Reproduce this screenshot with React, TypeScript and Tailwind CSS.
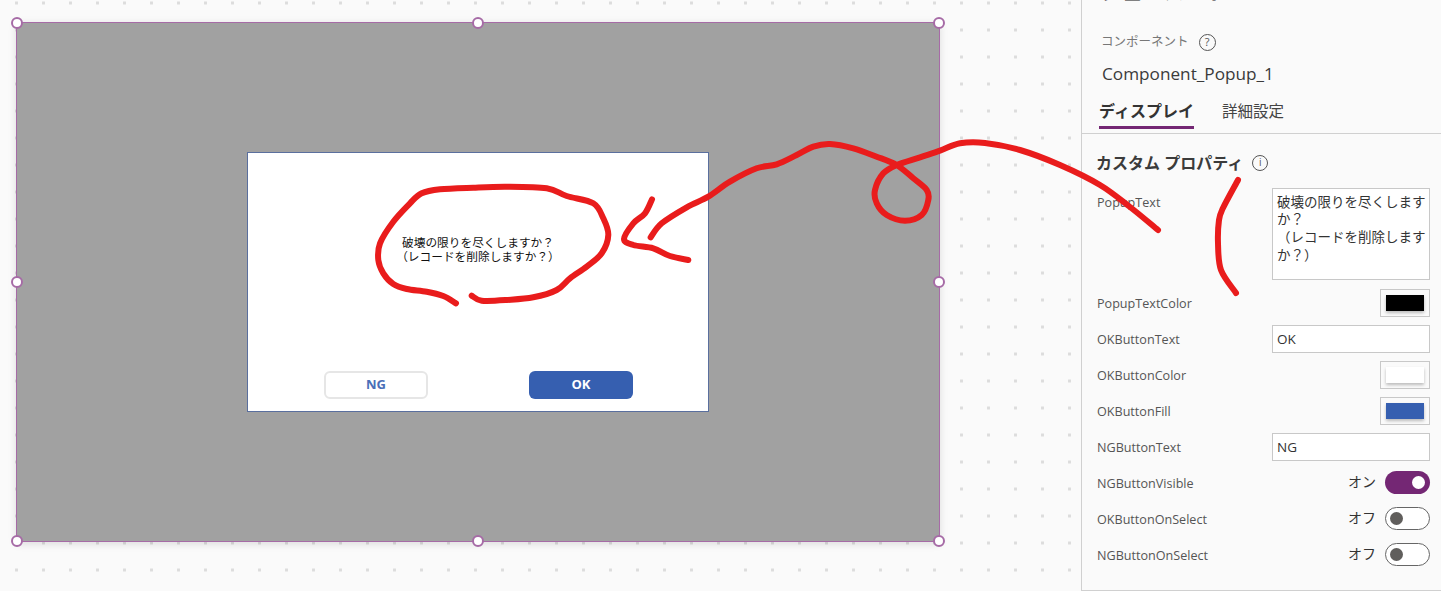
const font = { fontFamily: '"Open Sans","Noto Sans CJK JP",sans-serif' };

type P = [number, number];

function smooth(points: P[]): string {
  let d = `M${points[0][0]} ${points[0][1]}`;
  for (let i = 0; i < points.length - 1; i++) {
    const p0 = points[Math.max(i - 1, 0)];
    const p1 = points[i];
    const p2 = points[i + 1];
    const p3 = points[Math.min(i + 2, points.length - 1)];
    const c1x = p1[0] + (p2[0] - p0[0]) / 6;
    const c1y = p1[1] + (p2[1] - p0[1]) / 6;
    const c2x = p2[0] - (p3[0] - p1[0]) / 6;
    const c2y = p2[1] - (p3[1] - p1[1]) / 6;
    d += ` C${c1x.toFixed(1)} ${c1y.toFixed(1)} ${c2x.toFixed(1)} ${c2y.toFixed(1)} ${p2[0].toFixed(1)} ${p2[1].toFixed(1)}`;
  }
  return d;
}

const map = (pts: P[], ox: number, oy: number): P[] => pts.map(([x, y]) => [ox + x / 3, oy + y / 3]);

const ring = map(
  [[648, 490], [610, 468], [560, 455], [500, 447], [460, 432], [430, 400], [415, 360], [420, 310], [460, 245], [510, 190], [545, 160], [600, 148], [700, 143], [800, 140], [920, 145], [980, 168], [1060, 190], [1090, 235], [1105, 285], [1085, 340], [1040, 380], [990, 415], [950, 450], [880, 472], [800, 480], [725, 482], [695, 467]],
  240, 140,
);
const head = map(
  [[1236, 178], [1215, 220], [1180, 250], [1152, 297], [1180, 315], [1240, 325], [1290, 348], [1345, 360]],
  240, 140,
);
const tail: P[] = [
  ...map(
    [[92, 322], [125, 280], [200, 232], [265, 200], [330, 155], [410, 115], [470, 103], [530, 75], [580, 50], [630, 42], [700, 55], [770, 80], [830, 105], [880, 145], [920, 180], [925, 210], [905, 255], [855, 272], [800, 255], [770, 220], [765, 180], [790, 130], [830, 105], [900, 82], [960, 62], [1020, 40]],
    620, 130,
  ),
  [985, 143], [1020, 150], [1060, 165], [1100, 185], [1130, 207], [1158, 230],
];
const bracket: P[] = [[1238, 180], [1223, 208], [1219, 220], [1218, 243], [1221, 270], [1236, 293]];

function Handle({ className }: { className: string }) {
  return <span className={`absolute h-3 w-3 rounded-full border-2 border-[#a66ba6] bg-white ${className}`} />;
}

function Row({ label, children }: { label: string; children: React.ReactNode }) {
  return (
    <div className="flex h-9 items-center justify-between">
      <span className="text-[12.6px] text-[#555]">{label}</span>
      <div className="mb-[4px]">{children}</div>
    </div>
  );
}

function TextBox({ value }: { value: string }) {
  return (
    <div className="flex h-7 w-[158px] items-center border border-[#c8c8c8] bg-white px-1 text-[13.5px] text-[#333]">{value}</div>
  );
}

function Swatch({ color }: { color: string }) {
  return (
    <div className="flex h-7 w-[50px] items-center justify-center border border-[#c8c8c8]">
      <div className="h-4 w-[38px] shadow-[0_2px_3px_rgba(0,0,0,0.25)]" style={{ backgroundColor: color }} />
    </div>
  );
}

function Toggle({ on }: { on: boolean }) {
  return (
    <div className="flex items-center gap-[9px]">
      <span className="-mt-[2px] text-sm text-[#333]">{on ? "オン" : "オフ"}</span>
      {on ? (
        <div className="flex h-[23px] w-[45px] items-center justify-end rounded-full bg-[#742774] pr-[5px]">
          <span className="h-[13px] w-[13px] rounded-full bg-white" />
        </div>
      ) : (
        <div className="flex h-[23px] w-[45px] items-center rounded-full border border-[#666] bg-white pl-[4px]">
          <span className="h-[13px] w-[13px] rounded-full bg-[#605e5c]" />
        </div>
      )}
    </div>
  );
}

export default function App() {
  return (
    <div className="relative flex h-[591px] w-[1441px] overflow-hidden bg-[#fafafa]" style={font}>
      <main className="h-[590px] flex-1 bg-[radial-gradient(circle,#dcdcdc_1.4px,transparent_1.6px)] bg-[size:27px_27px] bg-[position:3px_-10.5px] pl-4 pt-[22px]">
        <div className="relative h-[520px] w-[924px] border border-[#a66ba6] bg-[#a1a1a1] shadow-[0_2px_8px_rgba(0,0,0,0.12)]">
          <Handle className="-left-[6px] -top-[6px]" />
          <Handle className="left-[455px] -top-[6px]" />
          <Handle className="-right-[6px] -top-[6px]" />
          <Handle className="-left-[6px] top-[253px]" />
          <Handle className="-right-[6px] top-[253px]" />
          <Handle className="-bottom-[6px] -left-[6px]" />
          <Handle className="-bottom-[6px] left-[455px]" />
          <Handle className="-bottom-[6px] -right-[6px]" />
          <div className="flex h-full items-center justify-center">
            <div className="flex h-[260px] w-[462px] flex-col items-center border border-[#5a6f9e] bg-white">
              <p className="mt-[82px] text-center text-[11.7px] leading-[14px] text-[#111]">
                破壊の限りを尽くしますか？
                <br />
                （レコードを削除しますか？）
              </p>
              <div className="mt-auto mb-[12px] flex w-full justify-between pl-[76px] pr-[75px]">
                <div className="flex h-7 w-[104px] items-center justify-center rounded-[6px] border-2 border-[#e6e6e6] bg-white text-[13px] font-bold text-[#4a6fb8]">
                  NG
                </div>
                <div className="flex h-7 w-[104px] items-center justify-center rounded-[6px] bg-[#365fb0] text-[13px] font-bold text-white">
                  OK
                </div>
              </div>
            </div>
          </div>
        </div>
      </main>

      <aside className="h-full w-[360px] border-b border-l border-[#d0d0d0] bg-[#fafafa]">
        <div className="flex h-[8px] items-end overflow-hidden pl-[19px]">
          <span className="mb-[3px] whitespace-nowrap text-[21px] leading-[28px] font-bold text-[#222]">シェルパート</span>
        </div>
        <div className="mt-[25px] flex items-center gap-[10px] pl-[19px]">
          <span className="text-[12.5px] text-[#777]">コンポーネント</span>
          <span className="flex h-[17px] w-[17px] items-center justify-center rounded-full border border-[#555] text-[11px] text-[#555]">?</span>
        </div>
        <div className="mt-[10px] pl-[20px] text-[17.2px] leading-[24px] font-medium text-[#3b3b3b]">Component_Popup_1</div>
        <div className="mt-[13px] flex h-[35px] gap-7 border-b border-[#d0d0d0] pl-[17px]">
          <div className="h-[30px] border-b-[3px] border-[#742774] text-base leading-[24px] font-semibold text-[#333]">ディスプレイ</div>
          <div className="text-[15.5px] leading-[24px] text-[#444]">詳細設定</div>
        </div>
        <div className="mt-[17px] flex items-center gap-[9px] pl-[14px]">
          <span className="text-base leading-[24px] font-bold text-[#3b3b3b]">カスタム プロパティ</span>
          <span className="flex h-4 w-4 items-center justify-center rounded-full border border-[#555] text-[10px] text-[#555]">i</span>
        </div>
        <div className="mt-[13px] flex flex-col pl-[15px] pr-[11px]">
          <div className="flex h-[92px] items-start justify-between">
            <span className="mt-[6px] text-[12.6px] text-[#555]">PopupText</span>
            <div className="h-[92px] w-[158px] border border-[#c8c8c8] bg-white py-[5px] pl-1 text-[13.5px] leading-[17.7px] text-[#333]">
              破壊の限りを尽くしますか？
              <br />
              （レコードを削除しますか？）
            </div>
          </div>
          <div className="mt-[7px] flex flex-col">
            <Row label="PopupTextColor"><Swatch color="#000000" /></Row>
            <Row label="OKButtonText"><TextBox value="OK" /></Row>
            <Row label="OKButtonColor"><Swatch color="#ffffff" /></Row>
            <Row label="OKButtonFill"><Swatch color="#365fb0" /></Row>
            <Row label="NGButtonText"><TextBox value="NG" /></Row>
            <Row label="NGButtonVisible"><Toggle on /></Row>
            <Row label="OKButtonOnSelect"><Toggle on={false} /></Row>
            <Row label="NGButtonOnSelect"><Toggle on={false} /></Row>
          </div>
        </div>
      </aside>

      <svg className="pointer-events-none absolute left-0 top-0" width="1441" height="591" fill="none" stroke="#e91c1c" strokeWidth="6" strokeLinecap="round" strokeLinejoin="round">
        <path d={smooth(ring)} />
        <path d={smooth(head)} />
        <path d={smooth(tail)} />
        <path d={smooth(bracket)} />
      </svg>
    </div>
  );
}
